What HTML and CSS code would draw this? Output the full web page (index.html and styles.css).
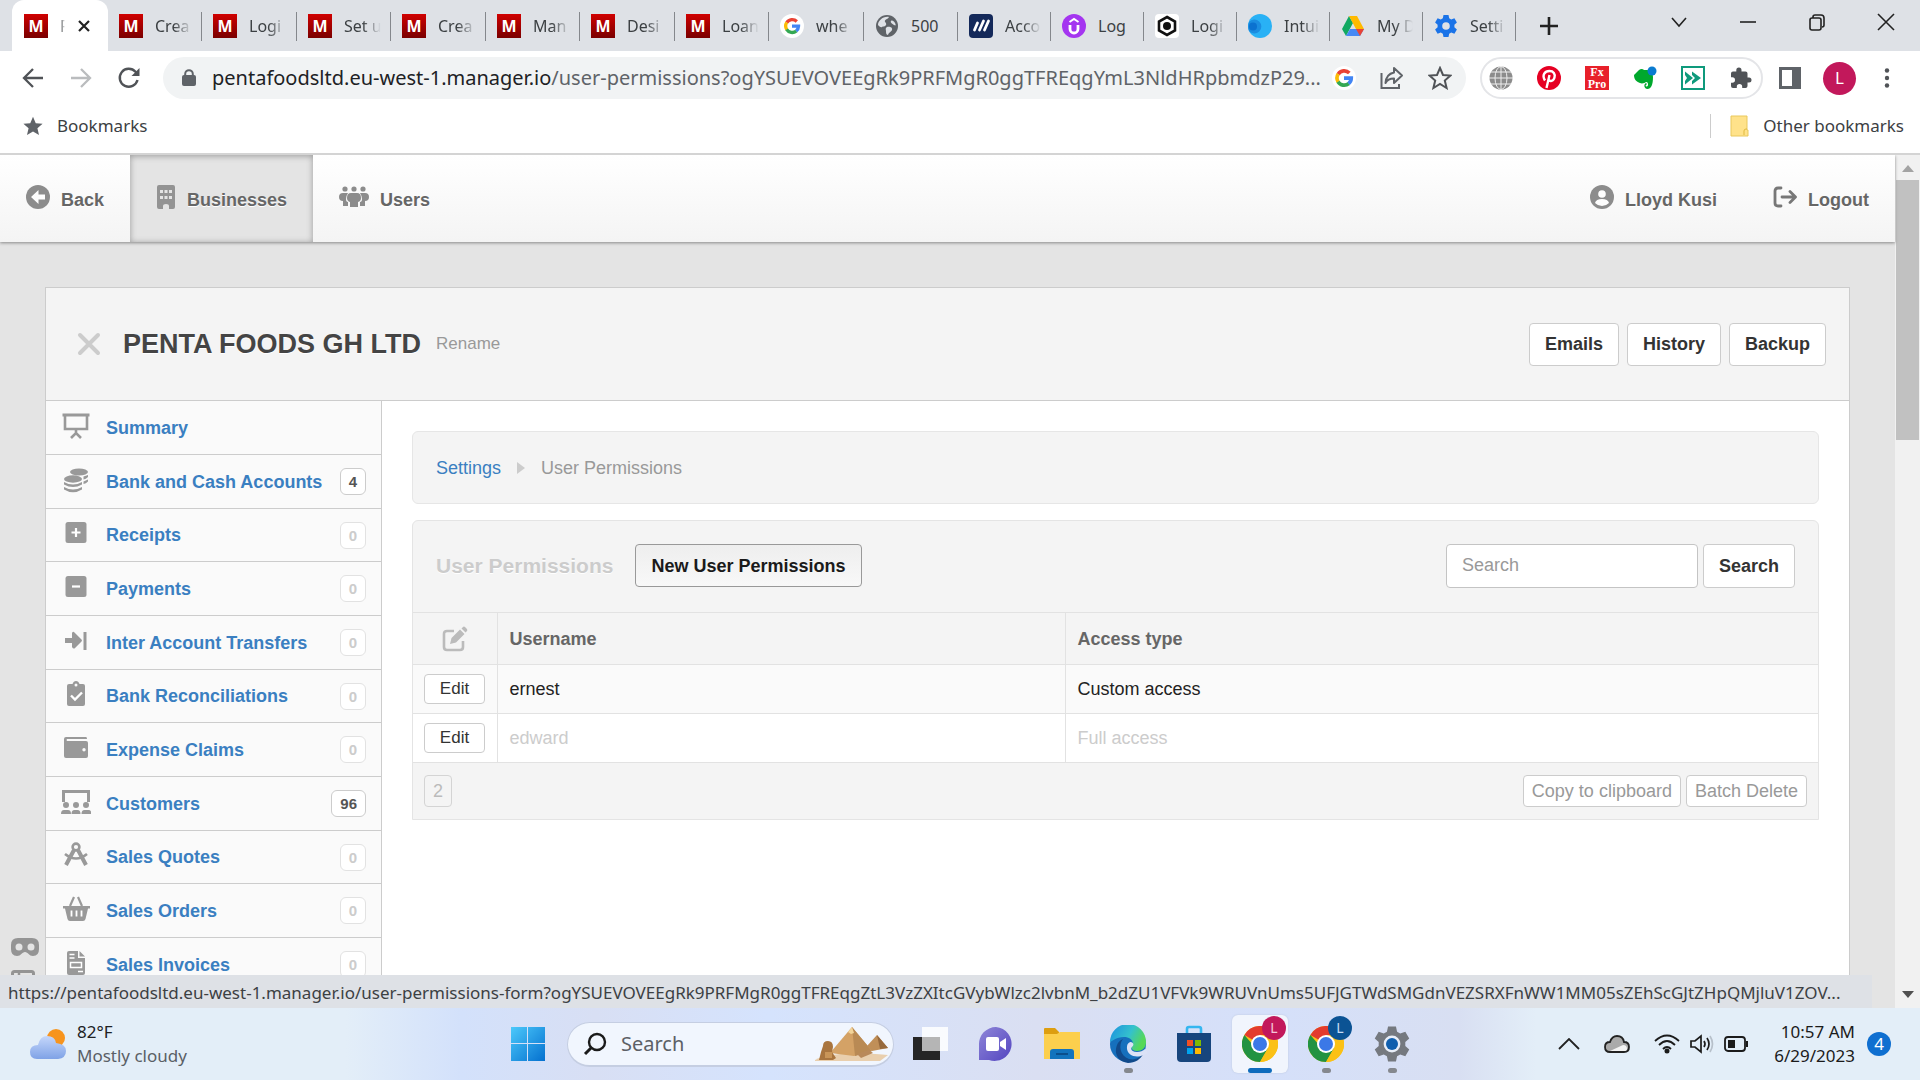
FILE: index.html
```html
<!DOCTYPE html>
<html lang="en">
<head>
<meta charset="utf-8">
<title>User Permissions</title>
<link rel="stylesheet" href="styles.css">
</head>
<body>
<svg class="defs" aria-hidden="true">
  <symbol id="google" viewBox="0 0 24 24"><g fill="none" stroke-width="4.4"><path stroke="#ea4335" d="M5 7.5A8.6 8.6 0 0 1 18.400 6"/><path stroke="#fbbc05" d="M5 7.300a8.800 8.800 0 0 0 0 9.400"/><path stroke="#34a853" d="M4.800 16.500A8.700 8.700 0 0 0 17.800 18.600"/><path stroke="#4285f4" d="M12 12.200h8.700a8.700 8.700 0 0 1-3.100 6.500"/></g></symbol>
  <symbol id="chrome" viewBox="0 0 36 36"><circle cx="18" cy="18" r="18" fill="#fbc116"/><path d="M18 18 2.400 9A18 18 0 0 1 33.600 9z" fill="#e33b2e"/><path d="M18 18H10.200L2.400 9a18 18 0 0 0 15.600 27l7.800-13.500z" fill="#229342"/><path d="M18 9h15.600A18 18 0 0 1 18 36l7.800-13.500z" fill="#fbc116"/><circle cx="18" cy="18" r="9" fill="#fff"/><circle cx="18" cy="18" r="7" fill="#3b78e7"/></symbol>
  <symbol id="gear" viewBox="0 0 24 24"><path fill-rule="evenodd" d="M9.500 1h5l.7 3.300 2 1.100L20.400 4.300l2.500 4.300-2.500 2.200v2.400l2.500 2.200-2.500 4.300-3.200-1.100-2 1.100-.7 3.300h-5l-.7-3.300-2-1.100-3.200 1.100-2.500-4.300 2.500-2.200v-2.400L1.100 8.600l2.500-4.300 3.200 1.100 2-1.100zM12 8.200a3.800 3.800 0 1 0 0 7.600 3.800 3.800 0 0 0 0-7.600z"/></symbol>
</svg>

<header class="browser">
  <div class="tabstrip">
    <div class="tab active"><span class="m-icon">M</span><span class="tab-title">P</span>
      <button class="bare" aria-label="Close tab"><svg width="14" height="14" viewBox="0 0 14 14"><path d="M2 2l10 10M12 2L2 12" stroke="#222" stroke-width="2.200"/></svg></button></div>
    <div class="tabs">
      <div class="tab"><span class="m-icon">M</span><span class="tab-title">Crea</span></div>
      <div class="tab"><span class="m-icon">M</span><span class="tab-title">Logi</span></div>
      <div class="tab"><span class="m-icon">M</span><span class="tab-title">Set u</span></div>
      <div class="tab"><span class="m-icon">M</span><span class="tab-title">Crea</span></div>
      <div class="tab"><span class="m-icon">M</span><span class="tab-title">Man</span></div>
      <div class="tab"><span class="m-icon">M</span><span class="tab-title">Desi</span></div>
      <div class="tab"><span class="m-icon">M</span><span class="tab-title">Loan</span></div>
      <div class="tab"><svg width="24" height="24" viewBox="0 0 24 24"><circle cx="12" cy="12" r="12" fill="#fff"/><use href="#google" x="3" y="3" width="18" height="18"/></svg><span class="tab-title">whe</span></div>
      <div class="tab"><svg width="24" height="24" viewBox="0 0 24 24"><circle cx="12" cy="12" r="11" fill="#5f6368"/><path fill="#dee1e6" d="M14 3c-1 2-3 2-4 3.500S12 9 11 11s-3 1-4 2-3-1-4-2C3 7 8 2 14 3zM12 13c2-1 6 0 5 3-1 2-3 2-4 5-2 0-2-3-2-4s-1-3 1-4zM16 7c1-1 3 0 4 2s1 3-1 2-4-3-3-4z"/></svg><span class="tab-title full">500</span></div>
      <div class="tab narrow"><svg width="24" height="24" viewBox="0 0 24 24"><rect width="24" height="24" rx="4" fill="#14295a"/><path d="M5.500 16l3-7M10.500 16l4-9M15.500 16l4-9" stroke="#fff" stroke-width="2.800" stroke-linecap="round"/></svg><span class="tab-title">Acco</span></div>
      <div class="tab narrow"><svg width="24" height="24" viewBox="0 0 24 24"><circle cx="12" cy="12" r="12" fill="#a435f0"/><path d="M8 11v4a4 4 0 0 0 8 0v-4" stroke="#fff" stroke-width="2.800" fill="none"/><path d="M7.500 8L12 5l4.500 3" stroke="#fff" stroke-width="2" fill="none"/></svg><span class="tab-title full">Log</span></div>
      <div class="tab narrow"><svg width="24" height="24" viewBox="0 0 24 24"><rect width="24" height="24" rx="4" fill="#fff"/><path d="M12 3l8 4.500v9L12 21l-8-4.500v-9z" fill="none" stroke="#111" stroke-width="2.600"/><circle cx="12" cy="12" r="4" fill="#111"/></svg><span class="tab-title">Logi</span></div>
      <div class="tab narrow"><svg width="24" height="24" viewBox="0 0 24 24"><circle cx="12" cy="12" r="12" fill="#29b1f5"/><path d="M1 8a7 7 0 1 1 0 9 12 12 0 0 1 0-9z" fill="#1b8de0"/><circle cx="5" cy="12.500" r="4" fill="#0b72d0"/></svg><span class="tab-title">Intui</span></div>
      <div class="tab narrow"><svg width="24" height="24" viewBox="0 0 24 24"><path d="M8 2L1 15l4 7 7-13z" fill="#11a861"/><path d="M8 2h8l7 13h-8z" fill="#ffba00"/><path d="M5 22l4-7h14l-4 7z" fill="#4688f4"/><path d="M15 15h8l-4 7z" fill="#ea4335"/></svg><span class="tab-title">My D</span></div>
      <div class="tab narrow"><svg width="24" height="24" viewBox="0 0 24 24" fill="#1a73e8"><use href="#gear"/></svg><span class="tab-title">Setti</span></div>
    </div>
    <button class="bare new-tab" aria-label="New tab"><svg width="18" height="18" viewBox="0 0 18 18"><path d="M9 0v18M0 9h18" stroke="#222" stroke-width="2.600"/></svg></button>
    <div class="window-buttons">
      <button class="bare" aria-label="Search tabs"><svg width="18" height="18" viewBox="0 0 18 18"><path d="M2 5l7 8 7-8" fill="none" stroke="#222" stroke-width="1.600"/></svg></button>
      <button class="bare" aria-label="Minimize"><svg width="18" height="18" viewBox="0 0 18 18"><path d="M1 9h16" stroke="#222" stroke-width="1.600"/></svg></button>
      <button class="bare" aria-label="Restore"><svg width="18" height="18" viewBox="0 0 18 18" fill="none" stroke="#222" stroke-width="1.600"><rect x="2" y="5" width="11" height="12" rx="2"/><path d="M5 5V4q0-2 2-2h6q3 0 3 3v7q0 2-2 2"/></svg></button>
      <button class="bare" aria-label="Close"><svg width="18" height="18" viewBox="0 0 18 18"><path d="M1 1l16 16M17 1L1 17" stroke="#222" stroke-width="1.600"/></svg></button>
    </div>
  </div>

  <div class="toolbar">
    <div class="nav-buttons">
      <button class="bare" aria-label="Back"><svg width="24" height="24" viewBox="0 0 24 24"><path d="M22 12H3M12 3l-9 9 9 9" fill="none" stroke="#505357" stroke-width="2.300"/></svg></button>
      <button class="bare" aria-label="Forward"><svg width="24" height="24" viewBox="0 0 24 24"><path d="M2 12h19M12 3l9 9-9 9" fill="none" stroke="#babcbe" stroke-width="2.300"/></svg></button>
      <button class="bare" aria-label="Reload"><svg width="24" height="24" viewBox="0 0 24 24"><path d="M20.500 14a9 9 0 1 1-2-8.200L21 8.400" fill="none" stroke="#505357" stroke-width="2.400"/><path d="M22.500 2v8h-8z" fill="#505357"/></svg></button>
    </div>
    <div class="address">
      <svg width="14" height="18" viewBox="0 0 14 18"><rect y="6" width="14" height="11" rx="2" fill="#5f6368"/><path d="M3.200 7V5a3.800 3.800 0 0 1 7.600 0v2" fill="none" stroke="#5f6368" stroke-width="2"/></svg>
      <span class="url"><b>pentafoodsltd.eu-west-1.manager.io</b>/user-permissions?ogYSUEVOVEEgRk9PRFMgR0ggTFREqgYmL3NldHRpbmdzP29...</span>
      <button class="bare" aria-label="Google Lens"><svg width="24" height="24" viewBox="0 0 24 24"><circle cx="12" cy="12" r="12" fill="#fff"/><use href="#google" x="2" y="2" width="20" height="20"/></svg></button>
      <button class="bare" aria-label="Share"><svg width="24" height="24" viewBox="0 0 24 24" fill="none" stroke="#5f6368" stroke-width="2"><path d="M1.500 7v15H19v-4"/><path d="M14 2l8 7.500-8 7.500v-4.500c-4 0-7 1.500-8.500 4.500.5-6 3.500-9.500 8.500-10.500z" stroke-linejoin="round"/></svg></button>
      <button class="bare" aria-label="Bookmark"><svg width="24" height="24" viewBox="0 0 24 24"><path d="M12 2l3 7 7.500.600-5.700 5 1.800 7.400L12 18l-6.600 4 1.800-7.400-5.700-5L9 9z" fill="none" stroke="#505357" stroke-width="2"/></svg></button>
    </div>
    <div class="extensions">
      <svg width="24" height="24" viewBox="0 0 24 24"><circle cx="12" cy="12" r="11.500" fill="#8c8c8c"/><path d="M12 0v24M0 12h24M2 6h20M2 18h20" stroke="#eee" fill="none"/><ellipse cx="12" cy="12" rx="6" ry="11.500" fill="none" stroke="#eee"/></svg>
      <svg width="24" height="24" viewBox="0 0 24 24"><circle cx="12" cy="12" r="12" fill="#e60023"/><path d="M8 14.500C4.500 9 8 5 12.500 5c4 0 6 3 5 6.500-1 4-5 4.500-6 2M12.500 9L9.500 22" fill="none" stroke="#fff" stroke-width="2.400"/></svg>
      <span class="fx">Fx<br>Pro</span>
      <svg width="24" height="24" viewBox="0 0 24 24"><path d="M1 9l5-5c2-1.500 4-1 5 0 4 0 9 0 9 7 0 8-2 12-5.500 12-4 0-4-6-1-6v2c-1.500 0-1 2 .5 1.500 2-1 1-5-1-4.500-1 1-4 2-6 1C4 16 1 14 1 9z" fill="#00a82d"/><circle cx="19" cy="5" r="4.500" fill="#0a7bd0"/></svg>
      <svg width="24" height="24" viewBox="0 0 24 24"><rect x="1" y="1" width="22" height="22" fill="#fff" stroke="#0e9a7c" stroke-width="2"/><path d="M4 5.500l8 6.500-8 6.500V15l2-3-2-3z" fill="#0e9a7c"/><path d="M11 5.500l9 6.500-9 6.500V15l3-3-3-3z" fill="#0e9a7c"/></svg>
      <svg width="24" height="24" viewBox="0 0 24 24"><path fill="#505357" d="M20 11.500h-1.500V7.500q0-2-2-2h-4V4.200a2.600 2.600 0 0 0-5.200 0v1.300H4q-2 0-2 2v3.800h1.300a2.700 2.700 0 0 1 0 5.400H2V20q0 2 2 2h3.800v-1.300a2.700 2.700 0 0 1 5.400 0V22h3.300q2 0 2-2v-3.500H20a2.500 2.500 0 0 0 0-5z"/></svg>
    </div>
    <div class="tool-end">
      <button class="bare" aria-label="Side panel"><svg width="22" height="22" viewBox="0 0 22 22"><rect x="1.500" y="1.500" width="19" height="19" fill="none" stroke="#5f6368" stroke-width="3"/><path d="M13 1h8v20h-8z" fill="#5f6368"/></svg></button>
      <button class="avatar">L</button>
      <button class="bare" aria-label="Menu"><svg width="6" height="20" viewBox="0 0 6 20" fill="#505357"><circle cx="3" cy="2.500" r="2.200"/><circle cx="3" cy="10" r="2.200"/><circle cx="3" cy="17.500" r="2.200"/></svg></button>
    </div>
  </div>

  <div class="bookmarks">
    <svg width="20" height="20" viewBox="0 0 24 24"><path d="M12 1l3.300 7.600 8.200.700-6.200 5.500 1.900 8.100L12 18.600l-7.200 4.300 1.900-8.100L.5 9.300l8.200-.700z" fill="#5f6368"/></svg>
    <a href="#">Bookmarks</a>
    <a href="#" class="other"><svg width="19" height="22" viewBox="0 0 19 22"><path d="M1 1h16v14h1v6H1z" fill="#ffe28a" stroke="#e9c85c"/><path d="M14 20v-4q0-2 2-2h1" fill="none" stroke="#e0b93e"/></svg>Other bookmarks</a>
  </div>
</header>

<div class="viewport">
  <div class="page">
    <nav class="topnav">
      <a href="#"><svg width="24" height="24" viewBox="0 0 24 24"><circle cx="12" cy="12" r="12" fill="#8c8c8c"/><path d="M12.500 5v4.500H19v5h-6.500V19L5 12z" fill="#fdfdfd"/></svg>Back</a>
      <a href="#" class="current"><svg width="20" height="24" viewBox="0 0 20 24"><path fill="#939393" fill-rule="evenodd" d="M3 0h14q2 0 2 2v20q0 2-2 2h-4v-3q0-2-3-2t-3 2v3H3q-2 0-2-2V2q0-2 2-2zM4 5v3h3V5zM8.500 5v3h3V5zM13 5v3h3V5zM4 11v3h3v-3zM8.500 11v3h3v-3zM13 11v3h3v-3z"/></svg>Businesses</a>
      <a href="#"><svg width="30" height="24" viewBox="0 0 30 24" fill="#8c8c8c"><circle cx="6" cy="4" r="2.600"/><circle cx="15" cy="4" r="2.600"/><circle cx="24" cy="4" r="2.600"/><path d="M4 8h5q-2 3-2 6t2 3v4H4v-5q-4 0-4-4t4-4zM26 8h-5q2 3 2 6t-2 3v4h5v-5q4 0 4-4t-4-4z"/><path d="M12 8h6q4 0 4 5 0 3-3 4v5h-8v-5q-3-1-3-4 0-5 4-5z"/></svg>Users</a>
      <a href="#" class="push"><svg width="24" height="24" viewBox="0 0 24 24"><circle cx="12" cy="12" r="12" fill="#8c8c8c"/><circle cx="12" cy="9" r="3.800" fill="#fdfdfd"/><path d="M5 18q1-4 7-4t7 4q-3 3-7 3t-7-3z" fill="#fdfdfd"/></svg>Lloyd Kusi</a>
      <a href="#"><svg width="24" height="24" viewBox="0 0 24 24" fill="none" stroke="#777" stroke-width="2.800" stroke-linecap="round" stroke-linejoin="round"><path d="M8 3H5Q2 3 2 6v12q0 3 3 3h3M9 12h13M17 6.500l5.500 5.500-5.500 5.500"/></svg>Logout</a>
    </nav>

    <aside class="side-tools">
      <svg width="28" height="18" viewBox="0 0 28 18"><path fill="#8c8c8c" fill-rule="evenodd" d="M7 0h14q7 0 7 7v4q0 7-6 7c-4 0-5-4-8-4s-4 4-8 4q-6 0-6-7V7q0-7 7-7zM8 5.500a3.500 3.500 0 1 0 0 7 3.500 3.500 0 0 0 0-7zM20 5.500a3.500 3.500 0 1 0 0 7 3.500 3.500 0 0 0 0-7z"/></svg>
      <svg width="24" height="20" viewBox="0 0 24 20"><rect x="1.500" y="1.500" width="21" height="17" rx="2" fill="none" stroke="#8c8c8c" stroke-width="3"/><path d="M8 2v17M2 8h20" stroke="#8c8c8c" stroke-width="2.500"/></svg>
    </aside>

    <main class="panel">
      <header class="business">
        <svg width="24" height="24" viewBox="0 0 24 24"><path d="M3 3l18 18M21 3L3 21" stroke="#ccc" stroke-width="4" stroke-linecap="round"/></svg>
        <h1>PENTA FOODS GH LTD</h1>
        <a href="#">Rename</a>
        <div class="actions"><button class="btn">Emails</button><button class="btn">History</button><button class="btn">Backup</button></div>
      </header>
      <div class="columns">
        <ul class="menu">
          <li><svg viewBox="0 0 30 26"><path d="M1.500 2h27" stroke-width="3"/><path d="M4 3v13h22V3" /><path d="M15 17v4M10 25l5-5 5 5"/></svg><a href="#">Summary</a></li>
          <li><svg class="solid" viewBox="0 0 30 26"><ellipse cx="18" cy="5" rx="9" ry="3.500"/><ellipse cx="12" cy="12" rx="9" ry="3.700"/><path d="M3 15q9 5 18 0v2.500q-9 5-18 0zM3 20q9 5 18 0v2.500q-9 5.500-18 0zM22.500 9.500L27 8v2q-2 2-4.500 2.500zM22.500 14.500L27 12.500v2q-2 2-4.500 2.500z"/></svg><a href="#">Bank and Cash Accounts</a><span class="count on">4</span></li>
          <li><svg class="solid" viewBox="0 0 30 26"><rect x="4.500" y="2" width="21" height="21" rx="2.500"/><path d="M15 8v9M10.500 12.500h9" stroke="#fff" stroke-width="2.200"/></svg><a href="#">Receipts</a><span class="count">0</span></li>
          <li><svg class="solid" viewBox="0 0 30 26"><rect x="4.500" y="2" width="21" height="21" rx="2.500"/><path d="M11 12.500h8" stroke="#fff" stroke-width="2.200"/></svg><a href="#">Payments</a><span class="count">0</span></li>
          <li><svg class="solid" viewBox="0 0 30 26"><path d="M4 10h7V5q1-2 2.500-.5l7 7q1 1 0 2l-7 7Q12 21 11 19v-4H4zM22.500 4h3v18h-3z"/></svg><a href="#">Inter Account Transfers</a><span class="count">0</span></li>
          <li><svg class="solid" viewBox="0 0 30 26"><path fill-rule="evenodd" d="M8 3h3.500q1-3 3.500-3t3.500 3H22q2 0 2 2v18q0 2-2 2H8q-2 0-2-2V5q0-2 2-2zM15 2.500a1.500 1.500 0 1 0 0 3 1.500 1.500 0 0 0 0-3z"/><path d="M10 14.500l4 4 7-7" fill="none" stroke="#fff" stroke-width="2.400"/></svg><a href="#">Bank Reconciliations</a><span class="count">0</span></li>
          <li><svg class="solid" viewBox="0 0 30 26"><path fill-rule="evenodd" d="M5 2h20q1 0 1 2H6q-1 1 0 2h19q2 0 2 2v13q0 2-2 2H5q-2 0-2-2V4q0-2 2-2zM23 13a1.700 1.700 0 1 0 0 3.400 1.700 1.700 0 0 0 0-3.400z"/></svg><a href="#">Expense Claims</a><span class="count">0</span></li>
          <li><svg class="solid" viewBox="0 0 30 26"><path d="M2.500 13V2.500h25V13" fill="none" stroke="#999" stroke-width="3"/><circle cx="5" cy="16" r="3"/><circle cx="15" cy="16" r="3"/><circle cx="25" cy="16" r="3"/><path d="M0 25q0-4 3-4h4q3 0 3 4zM10.500 25q0-4 3-4h3q3 0 3 4zM20.500 25q0-4 3-4h4q3 0 3 4z"/></svg><a href="#">Customers</a><span class="count on">96</span></li>
          <li><svg viewBox="0 0 30 26"><circle cx="15" cy="5" r="3.400"/><path d="M13 8L5 23M17 8l8 15" stroke-width="4"/><path d="M4 12q11 9 22 0"/></svg><a href="#">Sales Quotes</a><span class="count">0</span></li>
          <li><svg class="solid" viewBox="0 0 30 26"><path d="M2 10h27v2.500h-2L24.500 23q-.5 2-2.500 2H9q-2 0-2.500-2L4 12.500H2z"/><path d="M9 10l4-9M21 10l-4-9" fill="none" stroke="#999" stroke-width="2.200"/><path d="M10.500 14.500v6M15.500 14.500v6M20.500 14.500v6" stroke="#fff" stroke-width="1.800"/></svg><a href="#">Sales Orders</a><span class="count">0</span></li>
          <li><svg class="solid" viewBox="0 0 30 26"><path d="M8 1h9v7h7v15q0 2-2 2H8q-2 0-2-2V3q0-2 2-2zM18.500 1l5.500 5.500h-5.500z"/><path d="M8.500 4.500h5M8.500 8h5M17 21.500h5M9.500 12.500h11v5h-11z" fill="none" stroke="#fff" stroke-width="1.500"/></svg><a href="#">Sales Invoices</a><span class="count">0</span></li>
        </ul>
        <section class="content">
          <nav class="crumbs"><a href="#">Settings</a><svg width="8" height="12" viewBox="0 0 8 12"><path d="M0 0l8 6-8 6z" fill="#ccc"/></svg><span>User Permissions</span></nav>
          <div class="card">
            <div class="card-head">
              <h2>User Permissions</h2>
              <button class="btn pressed">New User Permissions</button>
              <form class="search"><input type="text" placeholder="Search" aria-label="Search"><button type="button" class="btn">Search</button></form>
            </div>
            <table>
              <thead><tr><th class="edit-col" aria-label="Edit"><svg width="26" height="26" viewBox="0 0 26 26"><path d="M12 5H5Q2 5 2 8v13q0 3 3 3h13q3 0 3-3v-6" fill="none" stroke="#bbb" stroke-width="2.600"/><path d="M8 18l1.500-6L18 3.500l4.500 4.500L14 16.500zM19.500 2.500L21 1q1-1 2.500.5l1 1Q26 4 25 5l-1.500 1.500z" fill="#bbb"/></svg></th><th class="name-col">Username</th><th>Access type</th></tr></thead>
              <tbody>
                <tr class="odd"><td class="edit-col"><button class="small">Edit</button></td><td>ernest</td><td>Custom access</td></tr>
                <tr class="dim"><td class="edit-col"><button class="small">Edit</button></td><td>edward</td><td>Full access</td></tr>
              </tbody>
            </table>
            <div class="card-foot"><span class="total">2</span><button class="foot-btn">Copy to clipboard</button><button class="foot-btn">Batch Delete</button></div>
          </div>
        </section>
      </div>
    </main>
  </div>
  <div class="scrollbar"><svg width="12" height="7" viewBox="0 0 12 7"><path d="M6 0l6 7H0z" fill="#a3a3a3"/></svg><i></i><svg width="12" height="7" viewBox="0 0 12 7"><path d="M6 7l6-7H0z" fill="#505050"/></svg></div>
  <div class="status">https://pentafoodsltd.eu-west-1.manager.io/user-permissions-form?ogYSUEVOVEEgRk9PRFMgR0ggTFREqgZtL3VzZXItcGVybWlzc2lvbnM_b2dZU1VFVk9WRUVnUms5UFJGTWdSMGdnVEZSRXFnWW1MM05sZEhScGJtZHpQMjluV1ZOV...</div>
</div>

<footer class="taskbar">
  <div class="weather">
    <svg width="38" height="32" viewBox="0 0 38 32"><defs><linearGradient id="cl" x2="0" y2="1"><stop stop-color="#c5d7fb"/><stop offset="1" stop-color="#7fa2e6"/></linearGradient></defs><circle cx="27" cy="10" r="9" fill="#f7941e"/><path d="M8 31q-7 0-7-7t8-7q2-9 9-9 8 0 9 7 10 1 10 8t-8 8z" fill="url(#cl)"/></svg>
    <p>82°F<br><span>Mostly cloudy</span></p>
  </div>
  <div class="apps">
    <button class="app" aria-label="Start"><svg width="36" height="36" viewBox="0 0 36 36"><defs><linearGradient id="win" x2="1" y2="1"><stop stop-color="#4cc9fb"/><stop offset="1" stop-color="#0470cf"/></linearGradient></defs><path fill="url(#win)" d="M1 1h16v16H1zM18 1h17v16H18zM1 18h16v17H1zM18 18h17v17H18z"/></svg></button>
    <label class="task-search"><svg width="24" height="24" viewBox="0 0 24 24"><circle cx="14" cy="10" r="8" fill="none" stroke="#1b1b1b" stroke-width="2.400"/><path d="M8 16l-6 6" stroke="#1b1b1b" stroke-width="3"/></svg>
      <input type="text" placeholder="Search" aria-label="Search Windows">
      <svg width="74" height="36" viewBox="0 0 74 36"><path d="M0 34q20-10 73-5l-8 6H0z" fill="#e9cfae"/><path d="M37 1L15 27l24 3 18-5z" fill="#d4a266"/><path d="M37 1l3 29 17-5z" fill="#b98a54"/><path d="M37 1l-4 5 3 2 3-1z" fill="#f2d49a"/><path d="M62 9L52 20l5 5 16-3z" fill="#c08f58"/><path d="M62 9l3 14 8-1z" fill="#96693d"/><path d="M8 20q0-5 5-5t5 6l-1 5 4 6-3 2H4l2-8z" fill="#a9753f"/><path d="M10 26h7v6h-7z" fill="#c99558"/><path d="M42 28l12-4 4 3-12 5z" fill="#b9895a"/></svg></label>
    <button class="app" aria-label="Task view"><svg width="36" height="36" viewBox="0 0 36 36"><path d="M1 11h27v23H1z" fill="#252525"/><path d="M10 1h26v24H10z" fill="#fff" opacity=".85"/><path d="M10 11h18v14H10z" fill="#b5b5b5"/></svg></button>
    <button class="app" aria-label="Chat"><svg width="36" height="36" viewBox="0 0 36 36"><defs><linearGradient id="chat" x2="1" y2="1"><stop stop-color="#8f86d8"/><stop offset="1" stop-color="#5345c0"/></linearGradient></defs><path d="M18 1a17 17 0 1 1-7 33H1V19A17 17 0 0 1 18 1z" fill="url(#chat)"/><rect x="8" y="11" width="13" height="14" rx="2" fill="#fff"/><path d="M22 16l6-4v12l-6-4z" fill="#fff"/></svg></button>
    <button class="app" aria-label="File Explorer"><svg width="38" height="36" viewBox="0 0 38 36"><path d="M1 3q0-1 1-1h10l4 4v6H1z" fill="#dd9e10"/><path d="M1 8h13l3-2h20v27H1z" fill="#fccf4d"/><path d="M7 33v-7q0-3 3-3h18q3 0 3 3v7z" fill="#1273bd"/><path d="M13 28h12" stroke="#0b4f8c" stroke-width="2"/></svg></button>
    <button class="app open" aria-label="Edge"><svg width="38" height="38" viewBox="0 0 38 38"><defs><linearGradient id="ed" x2="1" y2=".4"><stop stop-color="#1c8fe0"/><stop offset=".6" stop-color="#34c1cd"/><stop offset="1" stop-color="#55d858"/></linearGradient></defs><circle cx="19" cy="19" r="18" fill="#1670bd"/><path d="M1 17A18 18 0 0 1 37 17c0 6-4 9-9 9-4 0-6-2-5-4 3-6-2-10-8-10-8 0-13 5-14 5z" fill="url(#ed)"/><path d="M14 14c-5 6-3 17 6 20 7 2 12-3 14-5-2 5-8 9-15 9C10 37 6 30 7 24s3-8 7-10z" fill="#114a8b"/><path d="M23 22c-2 2 0 5 5 5 3 0 6-1 8-3l4 4-6 2c-7 4-17 0-16-8 0-4 3-5 4-5 3 1 3 3 1 5z" fill="#dbe2f6"/></svg></button>
    <button class="app" aria-label="Store"><svg width="36" height="38" viewBox="0 0 36 38"><path d="M11 9V4q0-2 2-2h10q2 0 2 2v5" fill="none" stroke="#35b6f0" stroke-width="2.600"/><path d="M1 8h34v25q0 4-4 4H5q-4 0-4-4z" fill="#17457d"/><path d="M11 15h6v6h-6z" fill="#f25022"/><path d="M19 15h6v6h-6z" fill="#7fba00"/><path d="M11 23h6v6h-6z" fill="#00a4ef"/><path d="M19 23h6v6h-6z" fill="#ffb900"/></svg></button>
    <button class="app focus" aria-label="Chrome"><svg width="36" height="36"><use href="#chrome"/></svg><span class="profile">L</span></button>
    <button class="app open" aria-label="Chrome, second profile"><svg width="36" height="36"><use href="#chrome"/></svg><span class="profile blue">L</span></button>
    <button class="app open" aria-label="Settings"><svg width="38" height="38" viewBox="0 0 24 24" fill="#75797f"><use href="#gear"/><circle cx="12" cy="12" r="5.300" fill="#e8eef8"/><circle cx="12" cy="12" r="3.800" fill="#0f5fae"/></svg></button>
  </div>
  <div class="tray">
    <svg width="22" height="12" viewBox="0 0 22 12"><path d="M1 11L11 1l10 10" fill="none" stroke="#222" stroke-width="1.800"/></svg>
    <svg width="26" height="18" viewBox="0 0 26 18"><path d="M6 17q-5 0-5-5t5-5q2-6 7-6 6 0 7 6 5 0 5 5t-5 5z" fill="#aaa" stroke="#222" stroke-width="1.800"/><path d="M6 16l13-6q4 0 4 4 0 2-3 2z" fill="#f3f3f3"/></svg>
    <div class="status-icons">
      <svg width="26" height="20" viewBox="0 0 26 20" fill="none" stroke="#1b1b1b" stroke-width="1.800"><path d="M1 7Q13-4 25 7M5 11q8-8 16 0M9 15q4-4 8 0"/><circle cx="13" cy="17" r="1.600" fill="#1b1b1b"/></svg>
      <svg width="24" height="20" viewBox="0 0 24 20" fill="none" stroke="#1b1b1b" stroke-width="1.700"><path d="M1 7h4l6-5v16l-6-5H1z"/><path d="M14 7q2 3 0 6M17 4q4 6 0 12"/><path d="M20 2q5 8 0 16" stroke="#b7c0ca"/></svg>
      <svg width="26" height="20" viewBox="0 0 26 20"><rect x="1" y="3" width="20" height="14" rx="3" fill="none" stroke="#1b1b1b" stroke-width="1.800"/><path d="M4 6h7v8H4zM22 7h2v6h-2z" fill="#1b1b1b"/></svg>
    </div>
    <p class="clock">10:57 AM<br>6/29/2023</p>
    <span class="notices">4</span>
  </div>
</footer>
</body>
</html>
```
FILE: styles.css
```css
* { box-sizing: border-box; }
body {
  margin: 0;
  height: 100vh;
  display: flex;
  flex-direction: column;
  overflow: hidden;
  font: 17px/24px "Noto Sans", sans-serif;
  color: #3c4043;
}
svg { display: block; flex: none; }
a { color: inherit; text-decoration: none; }
p, h1, h2 { margin: 0; }
button, input { font: inherit; color: inherit; }
.defs { position: absolute; width: 0; height: 0; }
.bare { border: 0; padding: 0; background: none; display: flex; }

/* Browser chrome */
.browser { flex: none; background: #fff; border-bottom: 2px solid #d4d4d4; }
.tabstrip { display: flex; height: 51px; background: #dee1e6; padding-left: 12px; font-size: 16px; }
.tabs { display: flex; }
.tab { display: flex; align-items: center; gap: 12px; width: 94px; padding: 0 10px 0 11px; position: relative; }
.tab:nth-child(even) { width: 95px; }
.tabs .narrow { width: 93px; }
.tabs .tab::after { content: ""; position: absolute; right: 0; top: 12px; height: 29px; width: 1px; background: #84878c; }
.tab.active { width: 96px; background: #fff; border-radius: 12px 12px 0 0; padding: 0 17px 0 12px; }
.tab-title { flex: 1; overflow: hidden; white-space: nowrap; mask-image: linear-gradient(to right, #000 50%, transparent); }
.tab-title.full { mask-image: none; }
.tab.active .tab-title { mask-image: linear-gradient(to right, #000, transparent); }
.m-icon {
  flex: none; width: 24px; height: 24px;
  background: linear-gradient(#d00000, #7a0000);
  color: #fff; text-align: center; font-weight: 700;
}
.new-tab { align-items: center; padding: 0 24px; }
.window-buttons { display: flex; margin-left: auto; height: 44px; gap: 51px; padding-right: 25px; }
.window-buttons .bare { align-items: center; }

.toolbar { display: flex; align-items: center; height: 54px; padding: 0 24px 0 21px; }
.nav-buttons { display: flex; gap: 24px; margin-right: 22px; }
.address { flex: 1; min-width: 0; display: flex; align-items: center; gap: 24px; height: 42px; padding: 0 14px 0 19px; border-radius: 21px; background: #f1f3f4; }
.url { flex: 1; min-width: 0; margin: 0 -10px 0 -8px; font-size: 20px; white-space: nowrap; color: #5f6368; }
.url b { font-weight: 400; color: #202124; }
.extensions { display: flex; gap: 24px; align-items: center; height: 42px; margin-left: 14px; padding: 0 8px 0 7px; border: 2px solid #e4e5e8; border-radius: 21px; }
.fx { width: 24px; height: 24px; background: #e8202a; color: #fff; font: 700 12px/12px "Liberation Serif", serif; text-align: center; }
.tool-end { display: flex; align-items: center; gap: 28px; margin-left: 16px; margin-right: 6px; }
.avatar { width: 33px; height: 33px; margin-left: -6px; padding: 0; border: 0; border-radius: 50%; background: #c2185b; color: #fff; }

.bookmarks { display: flex; align-items: center; gap: 14px; height: 48px; padding: 0 16px 7px 23px; }
.other { display: flex; align-items: center; gap: 14px; margin-left: auto; padding-left: 19px; border-left: 1px solid #ccc; }

/* Web page */
.viewport { flex: 1; min-height: 0; display: flex; position: relative; overflow: hidden; }
.page { flex: 1; position: relative; background: #e4e4e4; font: 18px/24px "Liberation Sans", Arial, sans-serif; }
.topnav { display: flex; height: 87px; background: linear-gradient(#fff, #f4f4f4); box-shadow: 0 1px 3px #888; font-weight: 700; color: #666; text-shadow: 0 1px #fff; }
.topnav a { display: flex; align-items: center; gap: 11px; padding: 3px 26px 0; }
.topnav svg { margin-bottom: 6px; }
.topnav .current { background: #e4e4e4; box-shadow: inset 0 1px 6px #999; }
.topnav .push { margin-left: auto; padding-right: 30px; }

.side-tools { position: absolute; left: 11px; bottom: 18px; display: grid; gap: 14px; opacity: .9; }

.panel { margin: 45px 45px 0; border: 1px solid #ccc; background: #fff; }
.business { display: flex; align-items: center; height: 113px; padding: 0 23px 0 31px; background: #f4f4f4; border-bottom: 1px solid #ccc; }
.business h1 { margin: 0 15px 0 22px; font-size: 27px; line-height: 32px; color: #444; text-shadow: 0 1px #fff; }
.business a { font-size: 17px; color: #999; }
.actions { display: flex; gap: 8px; margin-left: auto; }
.btn { height: 43px; padding: 0 15px; border: 1px solid #ccc; border-radius: 4px; background: #fff; font-weight: 700; color: #333; }
.btn.pressed { border-color: #999; background: linear-gradient(#eee, #f8f8f8); color: #1a1a1a; }

.columns { display: flex; }
.menu { flex: none; width: 336px; margin: 0; padding: 0; list-style: none; border-right: 1px solid #ccc; background: #fafafa; }
.menu li { display: flex; align-items: center; height: 54px; padding: 0 15px; border-bottom: 1px solid #ccc; }
.menu li:nth-child(3n) { height: 53px; }
.menu svg { width: 30px; height: 26px; margin-bottom: 4px; fill: none; stroke: #999; stroke-width: 2.6; }
.menu .solid { fill: #999; stroke: none; }
.menu a { flex: 1; margin-left: 15px; font-weight: 700; color: #3a7fc1; white-space: nowrap; }
.count { min-width: 26px; height: 27px; padding: 0 8px; border: 1px solid #e2e2e2; border-radius: 6px; background: #fff; font: 700 15px/25px "Liberation Sans", Arial, sans-serif; color: #ccc; }
.count.on { border-color: #ccc; color: #555; }

.content { flex: 1; padding: 30px; }
.crumbs { display: flex; align-items: center; gap: 16px; height: 73px; padding: 0 23px; border: 1px solid #e6e6e6; border-radius: 6px; background: #f4f4f4; color: #999; }
.crumbs a { color: #3a7fc1; }
.card { margin-top: 16px; border: 1px solid #e4e4e4; border-radius: 6px 6px 0 0; background: #f4f4f4; }
.card-head { display: flex; align-items: center; height: 91px; padding: 0 23px 2px; }
.card-head h2 { margin-right: 22px; font-size: 21px; color: #ccc; text-shadow: 0 1px #fff; }
.search { display: flex; gap: 5px; margin-left: auto; }
.search input { width: 252px; height: 44px; padding: 0 15px; border: 1px solid #c4c4c4; border-radius: 4px; background: #fff; }
.search .btn { height: 44px; }
.search input::placeholder { color: #999; }
table { width: 100%; border-collapse: collapse; table-layout: fixed; }
th, td { height: 49px; padding: 0 12px; border: solid #e2e2e2; border-width: 1px 0 1px 1px; text-align: left; background: #fff; color: #222; }
th { height: 52px; background: #f4f4f4; color: #666; }
th:first-child, td:first-child { border-left: 0; }
th.edit-col { width: 84px; }
th.name-col { width: 568px; }
th svg { margin: auto; }
.odd td { background: #fafafa; }
.dim td { color: #ccc; }
td.edit-col { padding: 0 11px; }
.small { display: block; width: 61px; height: 30px; padding: 0; border: 1px solid #ccc; border-radius: 4px; background: #fff; font-size: 17px; color: #333; }
.card-foot { display: flex; align-items: center; gap: 5px; height: 56px; padding: 0 11px; }
.total { margin-right: auto; width: 28px; height: 32px; border: 1px solid #d4d4d4; border-radius: 4px; line-height: 30px; text-align: center; color: #bbb; }
.foot-btn { height: 32px; padding: 0 8px; border: 1px solid #ccc; border-radius: 4px; background: #fff; color: #999; }

.scrollbar { flex: none; width: 25px; background: #f1f1f1; display: flex; flex-direction: column; align-items: center; padding: 10px 0; }
.scrollbar i { width: 23px; height: 260px; margin: 8px 0 auto; background: #c1c1c1; }
.status { position: absolute; left: 0; right: 48px; bottom: 0; height: 33px; padding: 0 8px; background: #dee1e6; line-height: 35px; white-space: nowrap; overflow: hidden; }

/* Taskbar */
.taskbar {
  flex: none; height: 72px;
  display: grid; grid-template-columns: 1fr auto 1fr; align-items: center;
  background: linear-gradient(90deg, #e3eef8 0, #e3eef8 18%, #d3e1fb 24%, #d8dff4 31%, #d5e3fd 40%, #dadff2 54%, #d5e0fa 66%, #d8dff2 76%, #e3eef8 80%);
}
.weather { display: flex; align-items: center; gap: 10px; padding-left: 29px; color: #202124; }
.weather span { color: #5a5f66; }
.apps { display: flex; align-items: center; height: 72px; }
.app { position: relative; width: 66px; height: 58px; padding: 0; border: 0; background: none; display: grid; place-items: center; }
.app.focus::before { content: ""; position: absolute; inset: 0 5px; border-radius: 6px; background: #f1f5fd; box-shadow: 0 0 2px #bbc5dc; }
.app.focus svg { position: relative; }
.app.open::after, .app.focus::after { content: ""; position: absolute; bottom: 0; width: 9px; height: 5px; border-radius: 3px; background: #85888e; }
.app.focus::after { width: 24px; background: #0f6cbd; }
.profile { position: absolute; right: 7px; top: 1px; width: 24px; height: 24px; border-radius: 50%; background: #c2185b; color: #f5c5d8; font-size: 14px; }
.profile.blue { background: #0b5394; color: #c5dcf5; }
.task-search { display: flex; align-items: center; width: 327px; height: 45px; margin: 0 3px 0 6px; padding: 0 4px 0 15px; border-radius: 23px; background: #f1f6fe; border: 1px solid #c5cee2; border-bottom-width: 2px; }
.task-search input { flex: 1; min-width: 0; margin-left: 14px; padding: 0; border: 0; background: none; font-size: 20px; }
.task-search input::placeholder { color: #5c6066; }
.tray { display: flex; align-items: center; justify-content: flex-end; gap: 24px; padding-right: 29px; color: #1b1b1b; }
.status-icons { display: flex; gap: 10px; }
.clock { text-align: right; }
.notices { width: 24px; height: 24px; margin-left: -12px; border-radius: 50%; background: #0f6fd0; color: #fff; text-align: center; }
```
